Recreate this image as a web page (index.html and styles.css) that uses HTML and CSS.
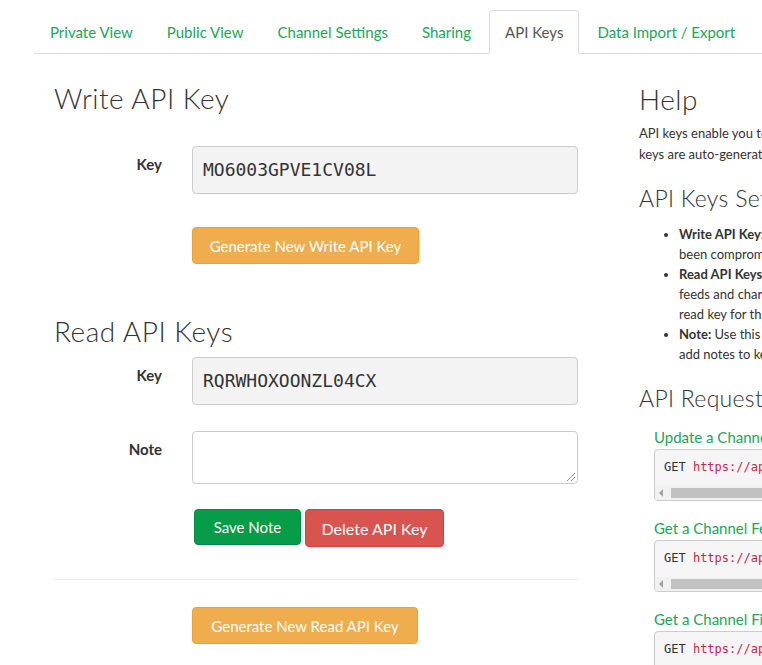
FILE: index.html
```html
<!DOCTYPE html>
<html lang="en">
<head>
<meta charset="utf-8">
<title>API Keys</title>
<link rel="stylesheet" href="styles.css">
</head>
<body>
<nav class="tabs">
  <a class="tab" href="#">Private View</a>
  <a class="tab" href="#">Public View</a>
  <a class="tab" href="#">Channel Settings</a>
  <a class="tab" href="#">Sharing</a>
  <a class="tab active" href="#">API Keys</a>
  <a class="tab" href="#">Data Import / Export</a>
</nav>
<main class="page">
  <section class="left">
    <h3 class="heading h-write">Write API Key</h3>
    <div class="row row-key1">
      <label class="lbl">Key</label>
      <div class="field key">MO6003GPVE1CV08L</div>
    </div>
    <div class="row row-btn1">
      <span></span>
      <div><button class="btn btn-warning">Generate New Write API Key</button></div>
    </div>
    <h3 class="heading h-read">Read API Keys</h3>
    <div class="row row-key2">
      <label class="lbl">Key</label>
      <div class="field key">RQRWHOXOONZL04CX</div>
    </div>
    <div class="row row-note">
      <label class="lbl">Note</label>
      <div class="field note"><span class="grip"></span></div>
    </div>
    <div class="row row-actions">
      <span></span>
      <div class="actions">
        <button class="btn btn-success">Save Note</button>
        <button class="btn btn-danger">Delete API Key</button>
      </div>
    </div>
    <hr class="sep">
    <div class="row row-btn2">
      <span></span>
      <div><button class="btn btn-warning">Generate New Read API Key</button></div>
    </div>
  </section>
  <aside class="right">
    <h3 class="heading h-help">Help</h3>
    <p class="para">API keys enable you to write data to a channel or read data from a private channel. API<br>keys are auto-generated when you create a new channel.</p>
    <h4 class="sub h-settings">API Keys Settings</h4>
    <ul class="list">
      <li><b>Write API Key:</b> Use this key to write data to a channel. If you feel your key has<br>been compromised, click <b>Generate New Write API Key</b>.</li>
      <li><b>Read API Keys:</b> Use this key to allow other people to view your private channel<br>feeds and charts. Click <b>Generate New Read API Key</b> to generate an additional<br>read key for the channel.</li>
      <li><b>Note:</b> Use this field to enter information about channel read keys. For example,<br>add notes to keep track of users with access to your channel.</li>
    </ul>
    <h4 class="sub h-requests">API Requests</h4>
    <div class="req">
      <a class="req-title" href="#">Update a Channel Feed</a>
      <div class="code"><div class="code-line"><span class="verb">GET</span> <span class="url">https://api.thingspeak.com/update?api_key=MO6003GPVE1CV08L&amp;field1=0</span></div><div class="hscroll"><span class="arrow"></span><span class="thumb"></span></div></div>
    </div>
    <div class="req">
      <a class="req-title" href="#">Get a Channel Feed</a>
      <div class="code"><div class="code-line"><span class="verb">GET</span> <span class="url">https://api.thingspeak.com/channels/1234567/feeds.json?api_key=RQRWHOXOONZL04CX&amp;results=2</span></div><div class="hscroll"><span class="arrow"></span><span class="thumb"></span></div></div>
    </div>
    <div class="req">
      <a class="req-title" href="#">Get a Channel Field</a>
      <div class="code"><div class="code-line"><span class="verb">GET</span> <span class="url">https://api.thingspeak.com/channels/1234567/fields/1.json?api_key=RQRWHOXOONZL04CX&amp;results=2</span></div><div class="hscroll"><span class="arrow"></span><span class="thumb"></span></div></div>
    </div>
  </aside>
</main>
</body>
</html>
```
FILE: styles.css
```css
html, body {
  margin: 0;
  padding: 0;
  background: #fff;
}
body {
  width: 762px;
  height: 665px;
  overflow: hidden;
  font-family: "Lato", "Open Sans", sans-serif;
  color: #333;
  font-size: 14px;
}

/* tabs */
.tabs {
  display: flex;
  gap: 2px;
  margin-left: 34px;
  padding-top: 10px;
  border-bottom: 1px solid #ddd;
  width: 1000px;
}
.tab {
  display: block;
  padding: 10px 15px;
  line-height: 22px;
  font-size: 15px;
  color: #22a55b;
  text-decoration: none;
  border: 1px solid transparent;
  border-radius: 4px 4px 0 0;
  margin-bottom: -1px;
  white-space: nowrap;
}
.tab.active {
  color: #555;
  background: #fff;
  border-color: #ddd;
  border-bottom-color: #fff;
}

/* page */
.page {
  display: flex;
  padding-left: 54px;
  width: 1300px;
}
.left {
  width: 524px;
  flex: none;
}
.right {
  width: 524px;
  flex: none;
  margin-left: 61px;
}

.heading {
  font-family: "Lato", sans-serif;
  font-weight: 300;
  font-size: 28px;
  line-height: 32px;
  letter-spacing: 0.5px;
  margin: 0;
  color: #333;
}
.h-write { margin-top: 28px; }
.h-read { margin-top: 51px; }
.h-help { margin-top: 29px; }

.row {
  display: grid;
  grid-template-columns: 108px 386px;
  column-gap: 30px;
}
.row-key1 { margin-top: 32px; }
.row-btn1 { margin-top: 33px; }
.row-key2 { margin-top: 10px; }
.row-note { margin-top: 26px; }
.row-actions { margin-top: 25px; }
.row-btn2 { margin-top: 0; }

.lbl {
  text-align: right;
  font-weight: bold;
  font-size: 15px;
  line-height: 20px;
  padding-top: 8px;
}
.field {
  box-sizing: border-box;
  border: 1px solid #ccc;
  border-radius: 4px;
}
.key {
  height: 48px;
  background: #f3f3f3;
  font-family: "DejaVu Sans Mono", monospace;
  font-size: 18px;
  line-height: 46px;
  padding-left: 10px;
  color: #333;
}
.note {
  height: 53px;
  background: #fff;
  position: relative;
}
.grip {
  position: absolute;
  right: 2px;
  bottom: 2px;
  width: 8px;
  height: 8px;
  background: linear-gradient(135deg, transparent 45%, #999 45%, #999 55%, transparent 55%, transparent 70%, #999 70%, #999 80%, transparent 80%);
}

.btn {
  font-family: "Lato", sans-serif;
  font-size: 15px;
  color: #fff;
  border: 1px solid transparent;
  border-radius: 4px;
  padding: 0;
  height: 37px;
  white-space: nowrap;
  cursor: pointer;
}
.btn-warning {
  background: #f0ad4e;
  border-color: #eea236;
  width: 227px;
}
.row-btn2 .btn-warning { width: 226px; }
.actions {
  display: flex;
  gap: 4px;
  align-items: flex-start;
  padding-left: 2px;
}
.btn-success {
  background: #079c47;
  border-color: #068a3f;
  width: 107px;
  height: 36px;
}
.btn-danger {
  background: #d9534f;
  border-color: #d43f3a;
  width: 139px;
  height: 38px;
  font-size: 16px;
}
.sep {
  border: 0;
  border-top: 1px solid #eee;
  margin: 32px 0 27px;
}

/* right column */
.para {
  margin: 8px 0 0;
  font-size: 13px;
  line-height: 21px;
  white-space: nowrap;
}
.sub {
  font-family: "Lato", sans-serif;
  font-weight: 300;
  font-size: 23px;
  line-height: 26px;
  letter-spacing: 0.3px;
  margin: 0;
  color: #333;
}
.h-settings { margin-top: 20px; }
.h-requests { margin-top: 21px; }
.list {
  margin: 13px 0 0;
  padding-left: 40px;
  font-size: 13px;
  line-height: 20px;
  white-space: nowrap;
}
.list b { font-weight: bold; }

.req {
  padding-left: 15px;
  margin-top: 17px;
}
.h-requests + .req { margin-top: 16px; }
.req-title {
  display: block;
  color: #22a55b;
  font-size: 15px;
  line-height: 20px;
  text-decoration: none;
  white-space: nowrap;
}
.code {
  margin-top: 2px;
  box-sizing: border-box;
  height: 52px;
  border: 1px solid #ccc;
  border-radius: 4px;
  background: #f5f5f5;
  overflow: hidden;
}
.code-line {
  padding: 8px 9px 0;
  height: 18px;
  line-height: 18px;
  font-family: "DejaVu Sans Mono", monospace;
  font-size: 12px;
  white-space: nowrap;
  color: #333;
}
.url { color: #c7254e; }
.hscroll {
  margin-top: 10px;
  height: 14px;
  background: #f1f1f1;
  display: flex;
  align-items: center;
}
.arrow {
  width: 0;
  height: 0;
  margin-left: 4px;
  border-top: 4px solid transparent;
  border-bottom: 4px solid transparent;
  border-right: 4px solid #a3a3a3;
}
.thumb {
  margin-left: 8px;
  height: 10px;
  flex: 1;
  background: #c1c1c1;
}
```
